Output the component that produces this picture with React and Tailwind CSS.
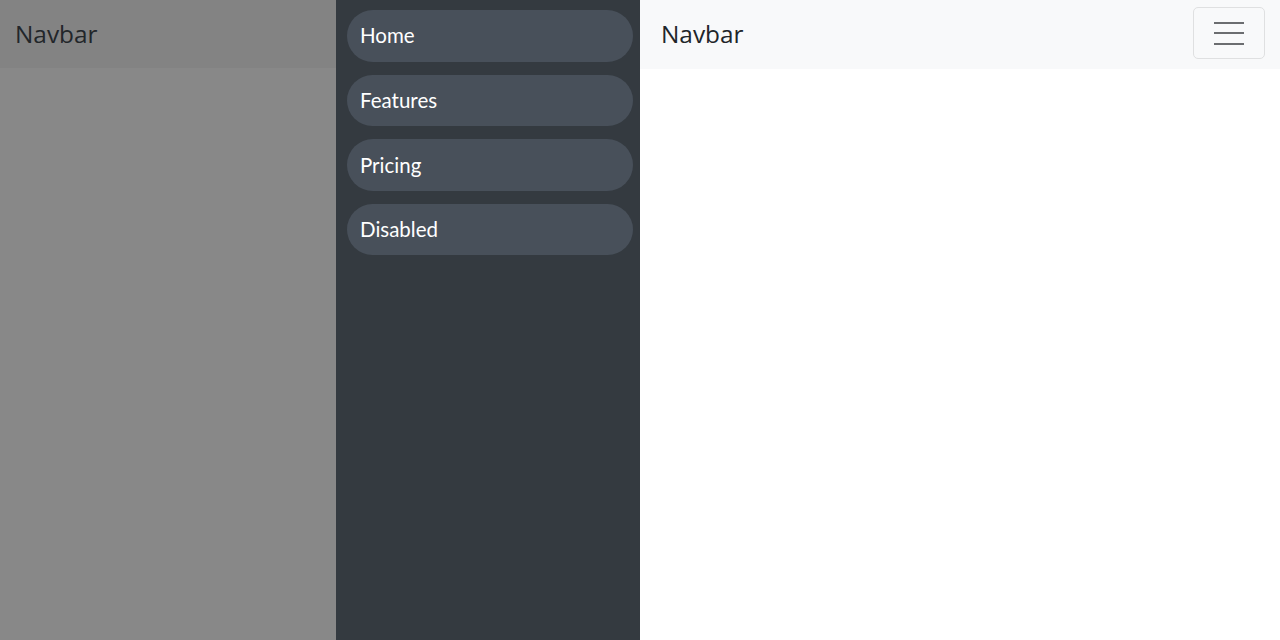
export default function App() {
  const items = ["Home", "Features", "Pricing", "Disabled"];
  return (
    <div className="flex h-[640px] w-[1280px] overflow-hidden" style={{ fontFamily: "'Open Sans', 'Noto Sans', sans-serif" }}>
      <div className="flex w-[336px] flex-col bg-[#888888]">
        <div className="flex h-[68px] items-center bg-[#838383] pl-[15px] text-[24.4px] text-[#22262a]">Navbar</div>
      </div>
      <div className="flex w-[304px] flex-col gap-[13px] bg-[#343a40] pl-[11px] pr-[7px] pt-[10px]">
        {items.map((t) => (
          <div key={t} className="flex h-[51.6px] items-center rounded-full bg-[#48505a] pl-[13px] text-[20.5px] text-white" style={{ fontFamily: "Lato, 'Open Sans', sans-serif" }}>
            {t}
          </div>
        ))}
      </div>
      <div className="flex flex-1 flex-col bg-white">
        <div className="flex h-[69px] items-start justify-between bg-[#f8f9fa] pl-[21px] pr-[15px]">
          <span className="mt-[16px] text-[24.4px] leading-[36px] text-[#212529]">Navbar</span>
          <button className="mt-[7px] flex h-[52px] w-[72px] flex-col items-center justify-center gap-[8.5px] rounded-[5px] border border-[#dfe0e1]">
            <span className="block h-[2px] w-[30px] bg-[#6b6d70]"></span>
            <span className="block h-[2px] w-[30px] bg-[#6b6d70]"></span>
            <span className="block h-[2px] w-[30px] bg-[#6b6d70]"></span>
          </button>
        </div>
      </div>
    </div>
  );
}
